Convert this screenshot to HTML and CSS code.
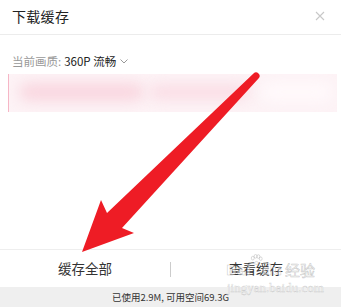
FILE: index.html
```html
<!DOCTYPE html>
<html lang="zh">
<head>
<meta charset="utf-8">
<link rel="stylesheet" href="styles.css">
</head>
<body>
<div class="sheet">
  <div class="header">
    <span class="title">下载缓存</span>
    <svg class="close" width="10" height="10" viewBox="0 0 10 10"><path d="M1 1L9 9M9 1L1 9" stroke="#c8c8c8" stroke-width="1.1" fill="none"/></svg>
  </div>
  <div class="quality">
    <span class="label">当前画质:</span>
    <span class="value">360P 流畅</span>
    <svg class="chev" width="8" height="5" viewBox="0 0 8 5"><path d="M0.5 0.5L4 4L7.5 0.5" stroke="#999" stroke-width="1" fill="none"/></svg>
  </div>
  <div class="preview">
    <div class="blob b1"></div>
    <div class="blob b2"></div>
    <div class="blob b3"></div>
  </div>
  <div class="spacer"></div>
  <div class="actions">
    <div class="btn">缓存全部</div>
    <div class="divider"></div>
    <div class="btn">查看缓存</div>
  </div>
  <div class="footer">已使用2.9M, 可用空间69.3G</div>

  <div class="watermark">
    <div class="wm-main"><span class="wm-bai">Bai</span><svg class="paw" width="13" height="12" viewBox="0 0 14 12"><g fill="none" stroke="rgba(150,150,150,0.45)" stroke-width="0.8"><ellipse cx="3" cy="4" rx="1.6" ry="2"/><ellipse cx="6" cy="2" rx="1.6" ry="2"/><ellipse cx="9" cy="2.3" rx="1.6" ry="2"/><ellipse cx="11.6" cy="4.6" rx="1.5" ry="1.9"/><path d="M4 10 Q7 5 10 10 Q7 11.5 4 10Z"/></g></svg><span class="wm-du">du</span><span class="wm-cn">经验</span></div>
    <div class="wm-sub">jingyan.baidu.com</div>
  </div>

  <svg class="arrow" width="341" height="307" viewBox="0 0 341 307">
    <path d="M107 213 L253.5 73.5 A3.3 3.3 0 0 1 258.5 78.5 L122 228 L134 233 L82 252 L101 200 Z" fill="#ee1c25"/>
  </svg>
</div>
</body>
</html>
```
FILE: styles.css
```css
html, body {
  margin: 0;
  padding: 0;
  background: #ffffff;
}
body {
  font-family: "Noto Sans CJK SC", "Noto Sans", sans-serif;
  color: #222;
}
.sheet {
  position: relative;
  width: 341px;
  height: 307px;
  display: flex;
  flex-direction: column;
  overflow: hidden;
}
.header {
  height: 35px;
  box-sizing: border-box;
  border-bottom: 1px solid #ececec;
  display: flex;
  align-items: center;
  justify-content: space-between;
  padding: 0 16px 2px 12px;
}
.title {
  font-size: 14px;
  color: #222;
  letter-spacing: 0.3px;
}
.quality {
  margin-top: 18px;
  height: 16px;
  padding: 0 12px;
  display: flex;
  align-items: center;
  font-size: 11.5px;
  line-height: 16px;
}
.label { color: #999; }
.value { color: #222; margin-left: 3px; }
.chev { margin-left: 4px; margin-top: 1px; }
.preview {
  position: relative;
  margin: 5px 4px 0 8px;
  height: 38px;
  background: #fdf3f6;
  border-left: 1.5px solid #f6b6c6;
  overflow: hidden;
}
.blob {
  position: absolute;
  border-radius: 20px;
  filter: blur(7px);
}
.b1 { left: 10px; top: 9px; width: 125px; height: 18px; background: #f9d6df; }
.b2 { left: 140px; top: 10px; width: 100px; height: 16px; background: #fadde5; }
.b3 { left: 252px; top: 8px; width: 72px; height: 20px; background: #fff9fb; }
.spacer { flex: 1; }
.actions {
  height: 38px;
  box-sizing: border-box;
  border-top: 1px solid #eeeeee;
  display: flex;
  align-items: center;
}
.btn {
  flex: 1;
  text-align: center;
  font-size: 13.5px;
  color: #333;
  padding-bottom: 2px;
}
.divider {
  width: 1px;
  height: 15px;
  background: #cccccc;
  margin-top: 2px;
}
.footer {
  height: 20px;
  background: #efefef;
  font-size: 9.5px;
  color: #333;
  text-align: center;
  line-height: 20px;
}
.watermark {
  position: absolute;
  left: 226px;
  top: 254px;
  width: 110px;
  white-space: nowrap;
  pointer-events: none;
}
.wm-main {
  display: flex;
  align-items: flex-end;
  height: 26px;
  color: rgba(255,255,255,0.5);
  -webkit-text-stroke: 0.6px rgba(140,140,140,0.45);
}
.wm-bai, .wm-du {
  font-family: "DejaVu Sans", sans-serif;
  font-weight: bold;
  font-size: 14px;
  line-height: 20px;
}
.paw { align-self: flex-start; margin: 0 -1px; }
.wm-cn {
  font-size: 15px;
  line-height: 20px;
  margin-left: 3px;
}
.wm-sub {
  font-family: "Liberation Serif", serif;
  font-size: 13px;
  line-height: 12px;
  margin-top: 2px;
  margin-left: 1px;
  color: rgba(255,255,255,0.6);
  -webkit-text-stroke: 0.4px rgba(140,140,140,0.4);
}
.arrow {
  position: absolute;
  left: 0;
  top: 0;
  pointer-events: none;
}
```
